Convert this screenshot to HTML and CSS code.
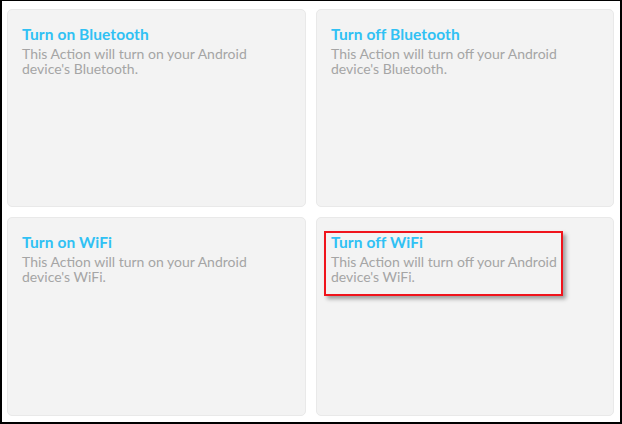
FILE: index.html
```html
<!DOCTYPE html>
<html>
<head>
<meta charset="utf-8">
<link rel="stylesheet" href="styles.css">
</head>
<body>
<div class="frame">
  <div class="grid">
    <div class="card">
      <div class="title">Turn on Bluetooth</div>
      <div class="desc">This Action will turn on your Android device's Bluetooth.</div>
    </div>
    <div class="card">
      <div class="title">Turn off Bluetooth</div>
      <div class="desc">This Action will turn off your Android device's Bluetooth.</div>
    </div>
    <div class="card">
      <div class="title">Turn on WiFi</div>
      <div class="desc">This Action will turn on your Android device's WiFi.</div>
    </div>
    <div class="card highlighted">
      <div class="title">Turn off WiFi</div>
      <div class="desc">This Action will turn off your Android device's WiFi.</div>
      <div class="annot"></div>
    </div>
  </div>
</div>
</body>
</html>
```
FILE: styles.css
```css
html, body {
  margin: 0;
  padding: 0;
  background: #fff;
}
.frame {
  box-sizing: border-box;
  width: 622px;
  height: 424px;
  border: 2px solid #000;
  border-top-width: 1px;
  padding: 8px 6px 6px 5px;
  background: #fff;
}
.grid {
  display: grid;
  grid-template-columns: 299px 298px;
  grid-template-rows: 198px 199px;
  column-gap: 10px;
  row-gap: 10px;
}
.card {
  position: relative;
  box-sizing: border-box;
  background: #f3f3f3;
  border: 1px solid #e9e9e9;
  border-radius: 5px;
  padding: 15px 14px 0 14px;
  font-family: Lato, "Noto Sans", sans-serif;
}
.title {
  color: #30c1f4;
  font-weight: 700;
  font-size: 15.5px;
  line-height: 19px;
  letter-spacing: 0.1px;
}
.desc {
  color: #a5a5a5;
  font-size: 14px;
  line-height: 15px;
  margin-top: 2px;
  width: 240px;
}
.annot {
  position: absolute;
  left: 7px;
  top: 13px;
  width: 239px;
  height: 65px;
  box-sizing: border-box;
  border: 2px solid #f0141c;
  box-shadow: 3px 3px 4px rgba(0,0,0,0.35);
}
```
